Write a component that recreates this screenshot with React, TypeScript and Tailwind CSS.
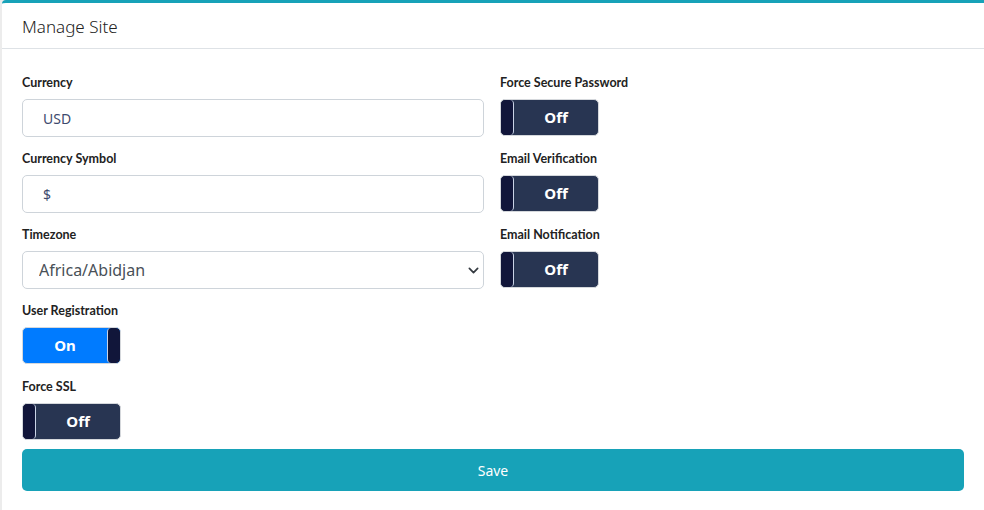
import React from 'react';

type Toggle = { label: string; on: boolean };

function Switch({ on }: { on: boolean }) {
  return (
    <div
      className={`flex h-[37px] w-[99px] rounded-[5px] border border-[#d5d8dc] overflow-hidden ${
        on ? 'bg-[#007bff] flex-row-reverse' : 'bg-[#283552]'
      }`}
    >
      <div
        className={`w-[13px] h-full bg-[#11163a] rounded-[4px] ${
          on ? 'border-l border-[#c9d3e6]' : 'border-r border-[#c9d3e6]'
        }`}
      ></div>
      <div className="flex-1 flex items-center justify-center text-white text-[15px] font-bold">
        {on ? 'On' : 'Off'}
      </div>
    </div>
  );
}

function Label({ text }: { text: string }) {
  return (
    <label
      className="h-[16px] mb-[8px] text-[12.5px] font-bold text-[#222] leading-[16px]"
      style={{ fontFamily: 'Lato, "Noto Sans", sans-serif' }}
    >
      {text}
    </label>
  );
}

function Field({ label, children }: { label: string; children: React.ReactNode }) {
  return (
    <div className="h-[76px] flex flex-col">
      <Label text={label} />
      {children}
    </div>
  );
}

export default function App() {
  const rightToggles: Toggle[] = [
    { label: 'Force Secure Password', on: false },
    { label: 'Email Verification', on: false },
    { label: 'Email Notification', on: false },
  ];

  const inputCls =
    'h-[38px] w-full rounded-[5px] border border-[#ced4da] bg-white px-5 text-[14px] text-[#3d4a6e] outline-none';

  return (
    <div
      className="w-[984px] h-[510px] bg-[#ececec] pl-[2px] overflow-hidden"
      style={{ fontFamily: '"Noto Sans", "Open Sans", sans-serif' }}
    >
      <div className="h-full bg-white border-t-[3px] border-[#17a2b8] rounded-tl-[4px]">
        <div className="h-[46px] border-b border-[#dee2e6] flex items-center px-5 pt-[3px]">
          <h2 className="text-[17px] font-light text-[#222]">Manage Site</h2>
        </div>

        <div className="px-5 pt-[26px]">
          <div className="grid grid-cols-[462px_1fr] gap-x-4">
            <div className="flex flex-col">
              <Field label="Currency">
                <input className={inputCls} defaultValue="USD" />
              </Field>
              <Field label="Currency Symbol">
                <input className={inputCls} defaultValue="$" />
              </Field>
              <Field label="Timezone">
                <div className="relative">
                  <select className={`${inputCls} appearance-none pl-[16px] text-[16px] text-[#495057]`}>
                    <option>Africa/Abidjan</option>
                  </select>
                  <svg
                    className="absolute right-[5px] top-[14px] w-[11px] h-[11px] text-[#343a40]"
                    viewBox="0 0 16 16"
                    fill="none"
                    stroke="currentColor"
                    strokeWidth="2.5"
                    strokeLinecap="round"
                    strokeLinejoin="round"
                  >
                    <path d="M2 5l6 6 6-6" />
                  </svg>
                </div>
              </Field>
              <Field label="User Registration">
                <Switch on={true} />
              </Field>
              <div className="flex flex-col">
                <Label text="Force SSL" />
                <Switch on={false} />
              </div>
            </div>

            <div className="flex flex-col">
              {rightToggles.map((t, i) => (
                <Field key={i} label={t.label}>
                  <Switch on={t.on} />
                </Field>
              ))}
            </div>
          </div>

          <button className="mt-[9px] w-full h-[42px] rounded-[5px] bg-[#17a2b8] text-white text-[14px]">
            Save
          </button>
        </div>
      </div>
    </div>
  );
}
